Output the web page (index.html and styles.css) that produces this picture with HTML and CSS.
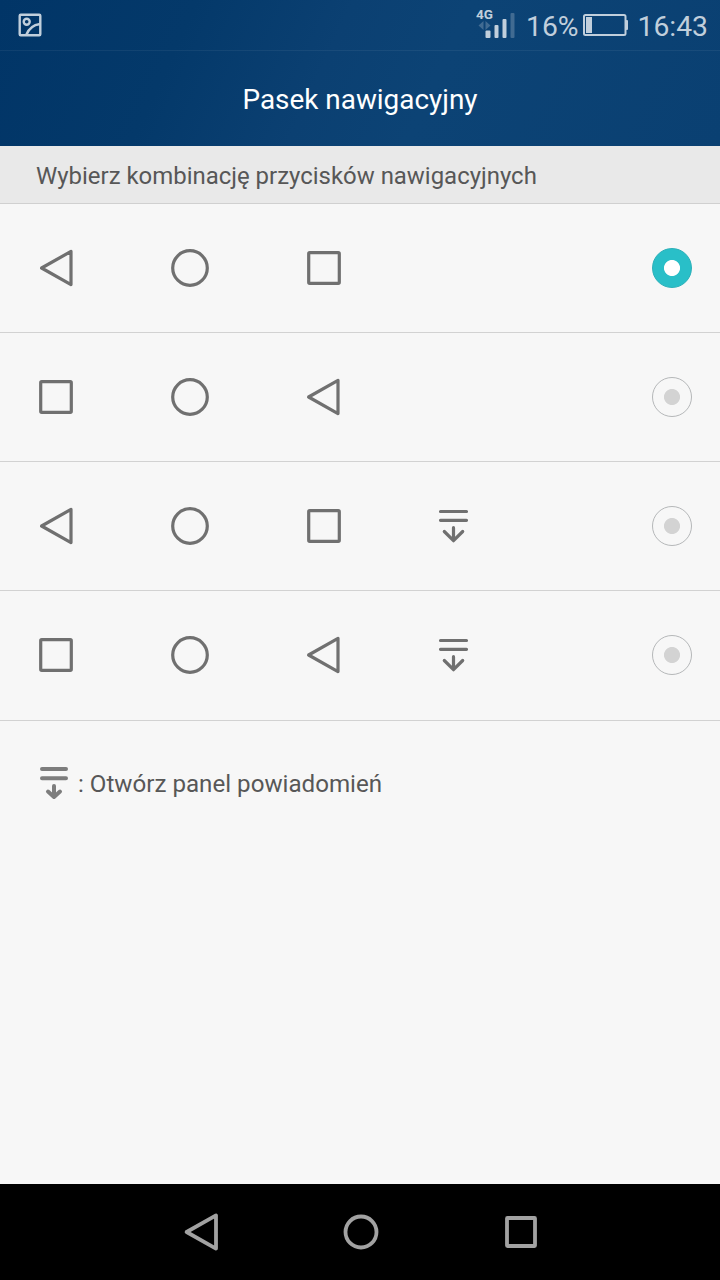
FILE: index.html
```html
<!DOCTYPE html>
<html lang="pl">
<head>
    <meta charset="UTF-8">
    <meta name="viewport" content="width=device-width, initial-scale=1.0">
    <title>Pasek nawigacyjny</title>
    <link rel="stylesheet" href="styles.css">
</head>
<body>
    <!-- Shared icon shapes -->
    <svg class="sprite">
        <symbol id="back" viewBox="0 0 48 48"><path d="M9.6 24 39 7.4V40.6Z"/></symbol>
        <symbol id="home" viewBox="0 0 48 48"><circle cx="24" cy="24" r="17.3"/></symbol>
        <symbol id="recent" viewBox="0 0 48 48"><rect x="8.700" y="8.700" width="30.600" height="30.600" rx="1"/></symbol>
        <symbol id="home-small" viewBox="0 0 48 48"><circle cx="24" cy="24" r="15.5"/></symbol>
        <symbol id="recent-small" viewBox="0 0 48 48"><rect x="10" y="10" width="28" height="28" rx="0.5"/></symbol>
        <symbol id="panel" viewBox="0 0 48 48"><path d="M10.5 9.5h26M10.5 18.3h26M23.5 25.7v12.5M14.3 29.5l9.2 9.2 9.2-9.2"/></symbol>
    </svg>

    <div class="screen">
        <header class="header">
            <div class="status-bar">
                <svg class="picture-icon" width="24" height="24" viewBox="0 0 24 24">
                    <rect x="1.7" y="1.7" width="20.6" height="20.6" rx="1"/>
                    <circle cx="8.7" cy="8.7" r="3"/>
                    <path d="M8.200 22C10.500 16 14.500 12 22 11"/>
                </svg>
                <div class="status-right">
                    <svg class="signal" width="40" height="40" viewBox="0 0 40 40">
                        <text x="0" y="14">4G</text>
                        <path class="dim" d="M2.500 20.500 7.500 16v9zM14.500 20.500 9.500 16v9z"/>
                        <rect x="9.500" y="25.500" width="5" height="7.500" rx="1"/>
                        <rect x="18.500" y="20" width="4" height="13" rx="1"/>
                        <rect x="26.500" y="14" width="4" height="19" rx="1"/>
                        <rect class="dim" x="34.500" y="8" width="4" height="25" rx="1"/>
                    </svg>
                    <span class="percent">16%</span>
                    <svg class="battery" width="46" height="24" viewBox="0 0 46 24">
                        <rect class="case" x="1" y="2" width="41.500" height="20" rx="1.500"/>
                        <rect x="3" y="4" width="6" height="16"/>
                        <rect x="42.500" y="7" width="2.500" height="10" rx="1"/>
                    </svg>
                    <span class="time">16:43</span>
                </div>
            </div>
            <h1>Pasek nawigacyjny</h1>
        </header>

        <h2>Wybierz kombinację przycisków nawigacyjnych</h2>

        <div class="options">
            <label class="option">
                <svg class="icon"><use href="#back"/></svg>
                <svg class="icon"><use href="#home"/></svg>
                <svg class="icon"><use href="#recent"/></svg>
                <input type="radio" name="combo" checked>
            </label>
            <label class="option">
                <svg class="icon"><use href="#recent"/></svg>
                <svg class="icon"><use href="#home"/></svg>
                <svg class="icon back-last"><use href="#back"/></svg>
                <input type="radio" name="combo">
            </label>
            <label class="option">
                <svg class="icon"><use href="#back"/></svg>
                <svg class="icon"><use href="#home"/></svg>
                <svg class="icon"><use href="#recent"/></svg>
                <svg class="icon panel"><use href="#panel"/></svg>
                <input type="radio" name="combo">
            </label>
            <label class="option">
                <svg class="icon"><use href="#recent"/></svg>
                <svg class="icon"><use href="#home"/></svg>
                <svg class="icon back-last"><use href="#back"/></svg>
                <svg class="icon panel"><use href="#panel"/></svg>
                <input type="radio" name="combo">
            </label>
        </div>

        <div class="legend">
            <svg width="28" height="34" viewBox="0 0 28 34">
                <path d="M2 3h24M2 12.200h24M14 20v10M8 25.500l6 5.500 6-5.500"/>
            </svg>
            <p>: Otwórz panel powiadomień</p>
        </div>

        <nav class="nav-bar">
            <svg class="icon"><use href="#back"/></svg>
            <svg class="icon"><use href="#home-small"/></svg>
            <svg class="icon"><use href="#recent-small"/></svg>
        </nav>
    </div>
</body>
</html>
```
FILE: styles.css
```css
* {
    box-sizing: border-box;
}

body {
    margin: 0;
    font-family: Roboto, "Liberation Sans", sans-serif;
    color: #575757;
    background-color: #f7f7f7;
}

.sprite {
    display: none;
}

.screen {
    display: flex;
    flex-direction: column;
    width: 720px;
    height: 1280px;
}

/* Header */
.header {
    height: 146px;
    background: linear-gradient(115deg, #013567 0%, #04396a 25%, #0b4072 45%, #0c4375 60%, #0a4072 100%);
}

.status-bar {
    display: flex;
    justify-content: space-between;
    align-items: center;
    height: 51px;
    padding: 0 12px 0 18px;
    border-bottom: 1px solid rgba(255, 255, 255, 0.06);
    color: #c1cfdc;
}

.picture-icon {
    fill: none;
    stroke: #c1cfdc;
    stroke-width: 2.4;
}

.status-right {
    display: flex;
    align-items: center;
    font-size: 28.3px;
    line-height: 46px;
}

.status-right span {
    padding-top: 4px;
}

.signal {
    margin-right: 10px;
    fill: #c1cfdc;
}

.signal text {
    font-size: 13.5px;
    font-weight: bold;
}

.signal .dim {
    fill: #416b92;
}

.battery {
    margin: 0 9px 0 4px;
    fill: #c1cfdc;
}

.battery .case {
    fill: none;
    stroke: #c1cfdc;
    stroke-width: 2;
}

h1 {
    margin: 0;
    color: #fff;
    font-size: 27.9px;
    font-weight: 400;
    line-height: 97px;
    text-align: center;
}

h2 {
    margin: 0;
    height: 58px;
    padding-left: 36px;
    background-color: #e9e9e9;
    border-bottom: 1px solid #d0d0d0;
    font-size: 23.95px;
    font-weight: 400;
    line-height: 61px;
}

/* Button combinations */
.option {
    display: flex;
    align-items: center;
    gap: 86px;
    height: 129px;
    padding: 0 28px 0 32px;
    border-bottom: 1px solid #d2d2d2;
}

.option:last-child {
    height: 130px;
    padding-bottom: 1px;
}

.icon {
    width: 48px;
    height: 48px;
    fill: none;
    stroke: #707070;
    stroke-width: 3.2;
    stroke-linejoin: round;
    stroke-linecap: round;
}

.icon.panel {
    margin-left: -4px;
}

.icon.back-last {
    margin: 0 1px 0 -1px;
}

input[type="radio"] {
    appearance: none;
    width: 40px;
    height: 40px;
    margin: 0 0 0 auto;
    border: 1px solid #b5b7b9;
    border-radius: 50%;
    background: radial-gradient(circle, #d3d3d3 7.6px, transparent 8.4px);
}

input[type="radio"]:checked {
    border-color: #2ab0b9;
    background: radial-gradient(circle, #fff 7.6px, #29bfc8 8.4px);
}

.legend {
    display: flex;
    align-items: center;
    gap: 10px;
    padding: 45px 40px;
    font-size: 24.15px;
}

.legend svg {
    fill: none;
    stroke: #7d7d7d;
    stroke-width: 4;
    stroke-linecap: round;
    stroke-linejoin: round;
}

.legend p {
    margin: 0;
    padding-top: 2px;
}

/* System navigation */
.nav-bar {
    display: flex;
    justify-content: center;
    align-items: center;
    gap: 112px;
    height: 96px;
    margin-top: auto;
    padding-left: 2px;
    background-color: #000;
}

.nav-bar .icon {
    stroke: #a2a2a2;
    stroke-width: 3.8;
}
```
